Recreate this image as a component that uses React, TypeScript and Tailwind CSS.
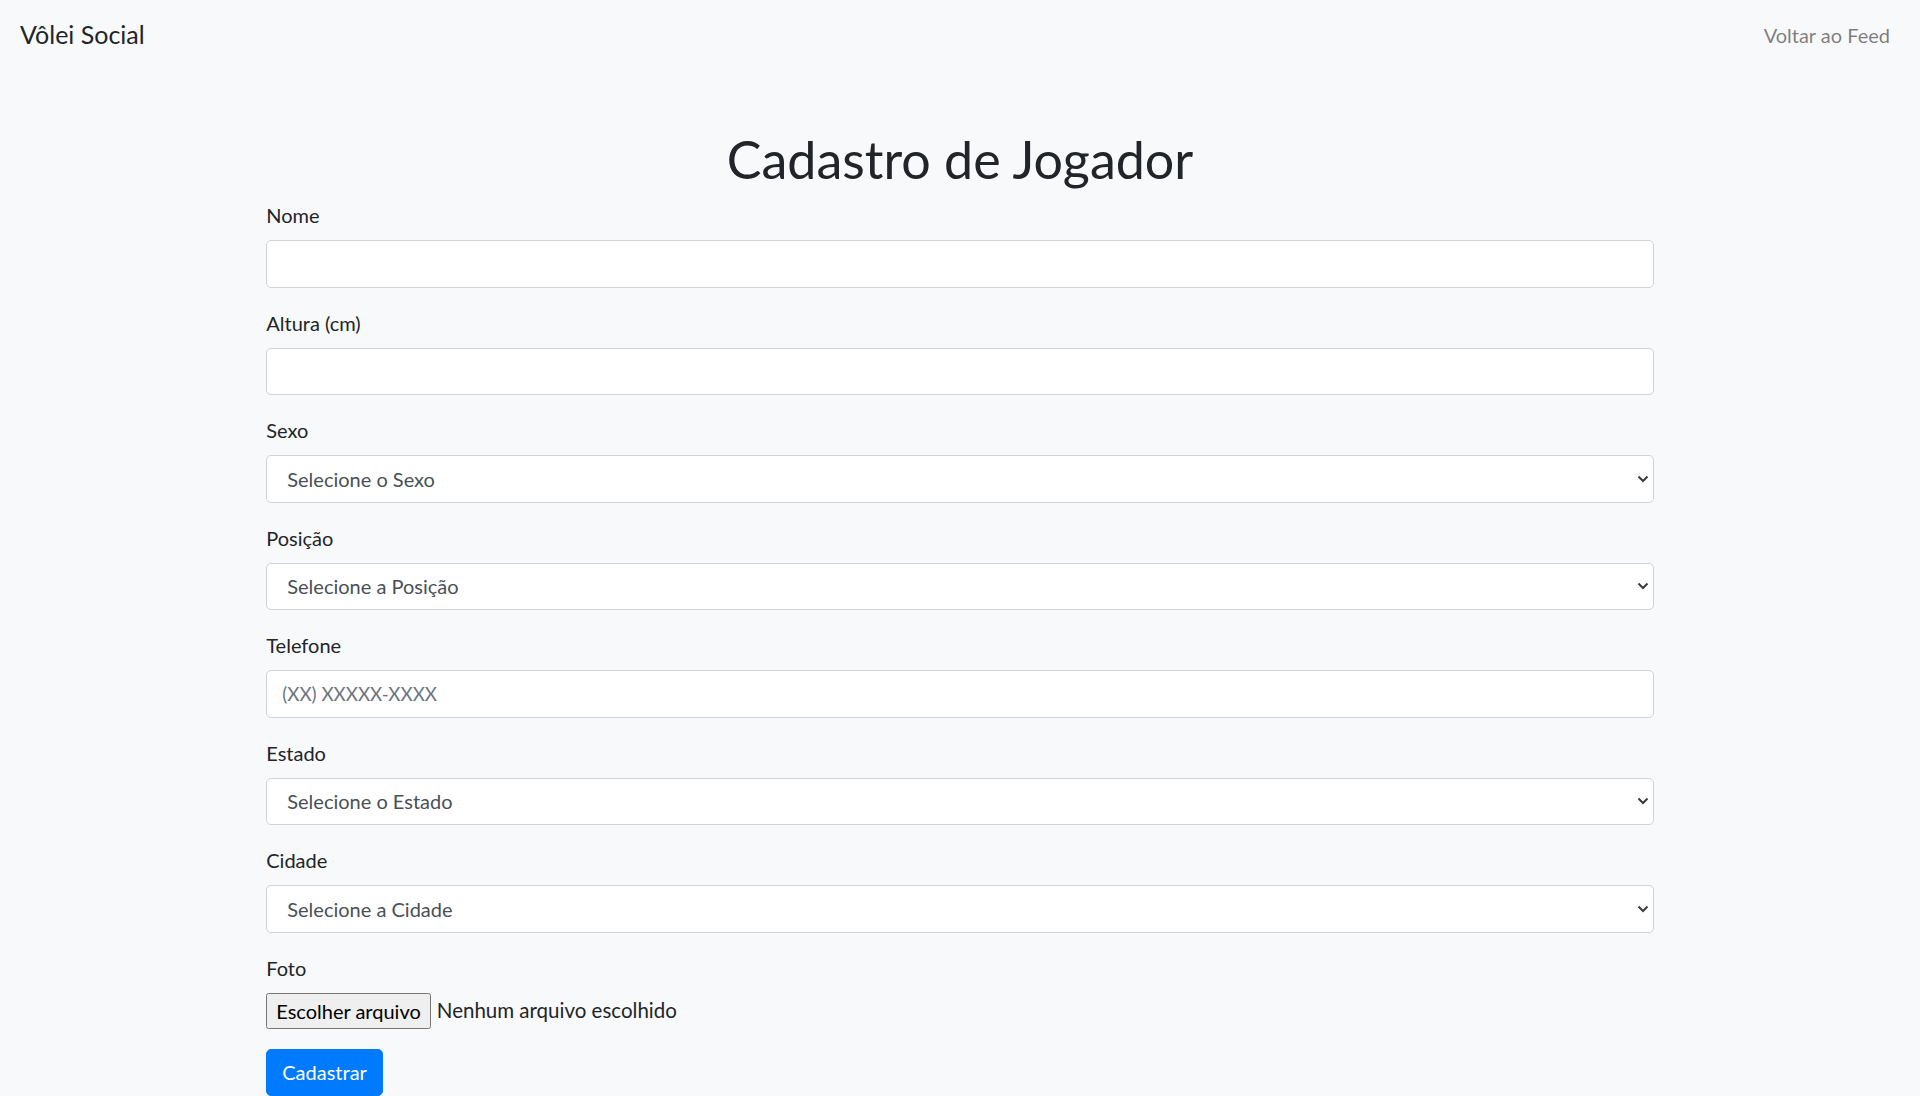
import React from "react";

const font = { fontFamily: "Lato, 'Open Sans', sans-serif" };

function Chevron() {
  return (
    <svg
      className="pointer-events-none absolute right-[5px] top-1/2 -translate-y-1/2"
      width="12"
      height="8"
      viewBox="0 0 12 8"
      fill="none"
    >
      <polyline points="1.5,1.5 6,6 10.5,1.5" stroke="#3b3b3b" strokeWidth="2" />
    </svg>
  );
}

function Label({ children }: { children: React.ReactNode }) {
  return <label className="block text-[20px] leading-[30px] mb-[10px] text-[#212529]">{children}</label>;
}

function TextField({ label, placeholder }: { label: string; placeholder?: string }) {
  return (
    <div className="mb-[20px]">
      <Label>{label}</Label>
      <input
        type="text"
        placeholder={placeholder}
        style={font}
        className="block w-full h-[47.5px] px-[15px] bg-white border border-[#ced4da] rounded-[5px] text-[18.75px] text-[#495057] placeholder:text-[#6c757d] outline-none"
      />
    </div>
  );
}

function SelectField({ label, placeholder }: { label: string; placeholder: string }) {
  return (
    <div className="mb-[20px]">
      <Label>{label}</Label>
      <div className="relative">
        <select
          style={font}
          className="block w-full h-[47.5px] pl-[20px] pr-[30px] bg-white border border-[#ced4da] rounded-[5px] text-[20px] text-[#495057] appearance-none outline-none"
          defaultValue=""
        >
          <option value="">{placeholder}</option>
        </select>
        <Chevron />
      </div>
    </div>
  );
}

export default function App() {
  return (
    <div className="min-h-screen bg-[#f8f9fa] text-[#212529]" style={font}>
      <nav className="flex items-center justify-between h-[70px] pl-[20px] pr-[30px]">
        <span className="text-[25px] leading-[37.5px] text-[#212529]">Vôlei Social</span>
        <a className="text-[20px] leading-[30px] text-[rgba(0,0,0,0.5)]">Voltar ao Feed</a>
      </nav>
      <div className="mx-auto w-[1425px] px-[18.75px]">
        <h1 className="text-center text-[52px] leading-[60px] mt-[59px] mb-[11px] font-normal text-[#212529]">
          Cadastro de Jogador
        </h1>
        <form>
          <TextField label="Nome" />
          <TextField label="Altura (cm)" />
          <SelectField label="Sexo" placeholder="Selecione o Sexo" />
          <SelectField label="Posição" placeholder="Selecione a Posição" />
          <TextField label="Telefone" placeholder="(XX) XXXXX-XXXX" />
          <SelectField label="Estado" placeholder="Selecione o Estado" />
          <SelectField label="Cidade" placeholder="Selecione a Cidade" />
          <div className="mb-[20px]">
            <Label>Foto</Label>
            <div className="flex items-center h-[36px]">
              <span className="flex items-center h-[36px] px-[9px] bg-[#efefef] border border-[#767676] rounded-[2.5px] text-[20px] text-black">
                Escolher arquivo
              </span>
              <span className="ml-[6px] text-[20.5px] text-[#212529]">Nenhum arquivo escolhido</span>
            </div>
          </div>
          <button
            type="button"
            className="h-[47.5px] px-[15px] bg-[#007bff] text-white text-[20px] rounded-[5px] border border-[#007bff]"
            style={font}
          >
            Cadastrar
          </button>
        </form>
      </div>
    </div>
  );
}
